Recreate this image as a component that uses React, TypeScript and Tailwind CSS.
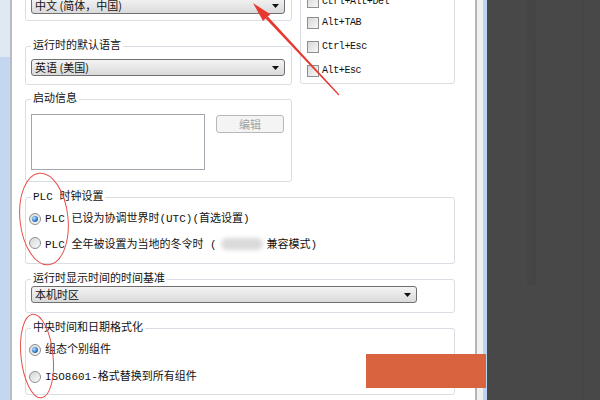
import type { ReactNode } from "react";

const CN = "font-['Noto_Sans_CJK_SC',sans-serif]";
const MIX = "font-['Liberation_Mono','Noto_Sans_CJK_SC',monospace]";

function Combo({ text, width }: { text: string; width: string }) {
  return (
    <div
      className={`flex h-[17px] items-center justify-between rounded-[3px] border border-[#707070] bg-linear-to-b from-[#f4f4f4] to-[#dadada] pl-[3px] pr-[5px] text-[11px] leading-none text-[#111] ${width} ${CN}`}
    >
      <span>{text}</span>
      <svg width="7" height="4" viewBox="0 0 7 4">
        <path d="M0 0h7L3.5 4z" fill="#111" />
      </svg>
    </div>
  );
}

function Group({ label, children, className = "" }: { label?: ReactNode; children: ReactNode; className?: string }) {
  return (
    <fieldset className={`min-w-0 rounded-[3px] border border-[#d9dee4] ${className}`}>
      {label && (
        <legend className={`ml-[5px] px-[2px] text-[11px] leading-[14px] text-[#111] ${MIX}`}>{label}</legend>
      )}
      {children}
    </fieldset>
  );
}

function Radio({ checked, children }: { checked?: boolean; children: ReactNode }) {
  return (
    <div className="flex h-[24px] items-center gap-[4px] pl-[3px]">
      <span className="flex h-[12px] w-[12px] items-center justify-center rounded-full border border-[#8e8f8f] bg-linear-to-br from-[#d6d6d6] to-[#fbfbfb]">
        {checked && (
          <span className="h-[6px] w-[6px] rounded-full bg-[radial-gradient(circle_at_35%_35%,#c4e6ff,#2f7acb_55%,#174c86)]" />
        )}
      </span>
      <span className={`text-[11px] leading-none text-[#111] ${MIX}`}>{children}</span>
    </div>
  );
}

function Check({ label, className = "h-[24px]" }: { label: string; className?: string }) {
  return (
    <div className={`flex items-center gap-[3px] ${className}`}>
      <span className="h-[12px] w-[12px] border border-[#8f8f8f] bg-linear-to-br from-[#d9d9d9] to-[#f7f7f7]" />
      <span className="font-['Liberation_Mono',monospace] text-[10px] leading-none tracking-[-0.4px] text-[#111]">
        {label}
      </span>
    </div>
  );
}

export default function App() {
  return (
    <div className="relative flex h-[400px] w-[600px] overflow-hidden bg-white">
      <div className="flex w-[10px] flex-col">
        <div className="h-[57px] bg-[#dfe8f3]" />
        <div className="flex-1 bg-[#c3d8f0]" />
      </div>
      <div className="w-[2px] bg-[#b9bcc0]" />

      <div className="w-[463px] bg-white pl-[13px]">
        <div className="-mt-[20px] w-[430px]">
          <div className="flex items-start gap-[8px]">
            <div className="flex w-[267px] flex-col">
              <Group>
                <div className="px-[5px] pb-[6px] pt-[16px]">
                  <Combo text="中文 (简体，中国)" width="w-[254px]" />
                </div>
              </Group>
              <Group label="运行时的默认语言" className="mt-[18px]">
                <div className="px-[5px] pb-[8px] pt-[6px]">
                  <Combo text="英语 (美国)" width="w-[254px]" />
                </div>
              </Group>
              <Group label="启动信息" className="mt-[7px]">
                <div className="flex items-start gap-[11px] px-[5px] pb-[11px] pt-[8px]">
                  <div className="h-[56px] w-[174px] border border-[#a3a7ad] bg-white" />
                  <div
                    className={`mt-[1px] flex h-[18px] w-[68px] items-center justify-center rounded-[3px] border border-[#b5b9bc] bg-[#f4f4f4] text-[11px] text-[#a2a2a2] ${CN}`}
                  >
                    编辑
                  </div>
                </div>
              </Group>
            </div>

            <Group className="w-[155px]">
              <div className="flex flex-col pl-[6px] pt-[12px]">
                <Check label="Ctrl+Alt+Del" className="h-[18px]" />
                <Check label="Alt+TAB" />
                <Check label="Ctrl+Esc" />
                <Check label="Alt+Esc" />
              </div>
            </Group>
          </div>

          <Group label="PLC 时钟设置" className="mt-[8px]">
            <div className="pb-[8px] pt-[3px]">
              <Radio checked>PLC 已设为协调世界时(UTC)(首选设置)</Radio>
              <Radio>
                PLC 全年被设置为当地的冬令时 (
                <span className="mx-[4px] inline-block h-[12px] w-[42px] translate-y-[2px] rounded-full bg-[#dadada] blur-[2px]" />
                兼容模式)
              </Radio>
            </div>
          </Group>

          <Group label="运行时显示时间的时间基准" className="mt-[8px]">
            <div className="px-[5px] pb-[9px]">
              <Combo text="本机时区" width="w-[386px]" />
            </div>
          </Group>

          <Group label="中央时间和日期格式化" className="mt-[8px]">
            <div className="flex flex-col gap-[3px] pb-[5px] pt-[3px]">
              <Radio checked>组态个别组件</Radio>
              <Radio>ISO8601-格式替换到所有组件</Radio>
            </div>
          </Group>
        </div>
      </div>

      <div className="w-[2px] bg-[#b4b4b4]" />
      <div className="w-[6px] bg-[#f0f0f0]" />
      <div className="w-[4px] bg-[#b9d5f2]" />
      <div className="flex flex-1 bg-[#484848]">
        <div className="ml-[40px] flex h-[285px] w-[9px] justify-end bg-[#454545]">
          <div className="mt-[35px] h-[250px] w-[3px] bg-[#3f4548]" />
        </div>
        <div className="ml-[46px] w-px bg-[#434343]" />
      </div>

      <div className="absolute left-[366px] top-[354px] h-[34px] w-[120px] bg-[#d9623f]" />

      <svg className="pointer-events-none absolute left-0 top-0" width="600" height="400" viewBox="0 0 600 400">
        <polygon points="267.8,16.6 265.6,18.6 338.6,95.4 339.4,94.6" fill="#e8372f" />
        <polygon points="253,3 270.3,14.2 263.0,21.0" fill="#e8372f" />
        <ellipse cx="44" cy="219" rx="24" ry="46" fill="none" stroke="#e8504a" strokeWidth="1" transform="rotate(-6 44 219)" />
        <ellipse cx="37" cy="356" rx="16" ry="42" fill="none" stroke="#e8504a" strokeWidth="1" transform="rotate(-6 37 356)" />
      </svg>
    </div>
  );
}
